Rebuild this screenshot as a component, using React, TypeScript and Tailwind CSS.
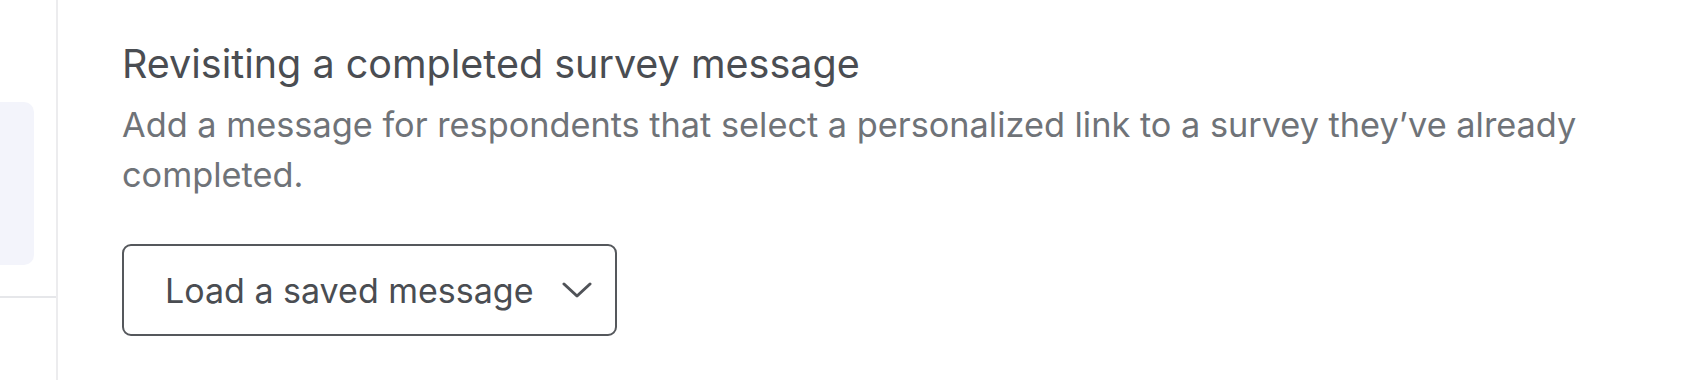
import React from "react";

export default function App() {
  return (
    <div className="flex h-[380px] w-[1700px] bg-white" style={{ fontFamily: "Inter, 'Noto Sans', sans-serif" }}>
      <div className="flex w-[58px] shrink-0 flex-col border-r-2 border-[#ececee]">
        <div className="mt-[102px] h-[163px] w-[34px] rounded-r-[10px] bg-[#f3f4fb]" />
        <div className="mt-[31px] h-[2px] w-full bg-[#e6e7ea]" />
      </div>
      <div className="flex flex-col pl-[64px]">
        <h2 className="mt-[41px] text-[39.5px] leading-[46px] font-normal text-[#4a4d52]">
          Revisiting a completed survey message
        </h2>
        <p className="mt-[13px] text-[34.3px] leading-[50px] text-[#6f7378]">
          Add a message for respondents that select a personalized link to a survey they’ve already
          <br />
          completed.
        </p>
        <button className="mt-[44px] flex h-[92px] w-[495px] items-center rounded-[9px] border-2 border-[#55585c] pl-[41px] text-[34px] text-[#4a4d52]">
          <span>Load a saved message</span>
          <svg className="ml-[28px]" width="30" height="18" viewBox="0 0 30 18" fill="none">
            <path d="M2 3 L15 15 L28 3" stroke="#505358" strokeWidth="3" strokeLinecap="round" strokeLinejoin="round" />
          </svg>
        </button>
      </div>
    </div>
  );
}
